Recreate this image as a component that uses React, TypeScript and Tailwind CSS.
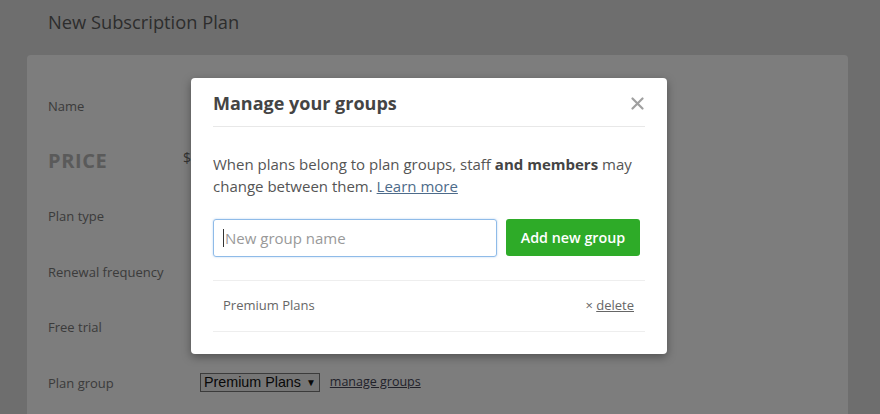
import React from "react";

export default function App() {
  const font = { fontFamily: '"Open Sans", "Lato", sans-serif' };
  const label = "h-[55.4px] flex items-center text-[13px] leading-[20px] text-[#777]";
  return (
    <div className="relative w-[880px] h-[414px] overflow-hidden bg-[#dddddd]" style={font}>
      <div className="px-[27px] pt-[9px]">
        <h1 className="pl-[21px] text-[18.3px] leading-[26px] text-[#5a5a5a]">New Subscription Plan</h1>
        <div className="mt-[20px] w-[821px] h-[400px] rounded-[4px] bg-[#fafafa] pl-[21px] pt-[23px]">
          <div className="flex flex-col">
            <div className={label}>Name</div>
            <div className="h-[55.4px] flex items-center">
              <div className="w-[135px] text-[20px] leading-[24px] font-bold tracking-[0.6px] text-[#b5b5b5]">PRICE</div>
              <div className="text-[14px] text-[#666] -mt-[8px]">$</div>
            </div>
            <div className={label}>Plan type</div>
            <div className={label}>Renewal frequency</div>
            <div className={label}>Free trial</div>
            <div className="h-[55.4px] flex items-center">
              <div className="w-[152px] text-[13px] leading-[20px] text-[#777]">Plan group</div>
              <div className="h-[19px] px-[3px] flex items-center border border-[#777] bg-[#ececec] text-[14.3px] text-[#111]" style={{ fontFamily: '"Liberation Sans", Arial, sans-serif' }}>
                Premium Plans <span className="ml-[5px] text-[10px]">▼</span>
              </div>
              <a className="ml-[10px] text-[12.5px] text-[#445] underline">manage groups</a>
            </div>
          </div>
        </div>
      </div>

      <div className="absolute inset-0 bg-black/50" />

      <div className="absolute left-[191px] top-[78px] w-[476px] rounded-[4px] bg-white px-[22px] pt-[13px] pb-[22px] shadow-[0_3px_10px_rgba(0,0,0,0.35)]">
        <div className="flex items-center justify-between border-b border-[#e8e8e8] pb-[11px]">
          <h2 className="text-[18px] leading-[24px] font-bold text-[#444]">Manage your groups</h2>
          <svg width="13" height="13" viewBox="0 0 13 13" className="mr-[1px]">
            <path d="M1.5 1.5 L11.5 11.5 M11.5 1.5 L1.5 11.5" stroke="#a0a0a0" strokeWidth="2.2" strokeLinecap="round" />
          </svg>
        </div>
        <p className="mt-[26px] text-[15px] leading-[22px] text-[#555]">
          When plans belong to plan groups, staff <b className="font-bold text-[#444]">and members</b> may change between them.{" "}
          <a className="text-[#4d6b8a] underline">Learn more</a>
        </p>
        <div className="mt-[22px] flex gap-[9px] pb-[23px] border-b border-[#eeeeee]">
          <div className="w-[284px] h-[38px] rounded-[3px] border border-[#8fbbe8] shadow-[0_0_2px_rgba(100,160,230,0.5)] flex items-center pl-[9px] text-[15px] text-[#999]">
            <span className="w-px h-[18px] bg-[#333] mr-[1px]" />New group name
          </div>
          <button className="w-[134px] h-[37px] rounded-[3px] bg-[#2eab28] text-white text-[14.3px] font-semibold">Add new group</button>
        </div>
        <div className="h-[51px] flex items-center justify-between pl-[10px] pr-[11px] border-b border-[#eeeeee]">
          <span className="text-[13px] text-[#666]">Premium Plans</span>
          <span className="text-[13px] text-[#666]">
            × <a className="underline">delete</a>
          </span>
        </div>
      </div>
    </div>
  );
}
